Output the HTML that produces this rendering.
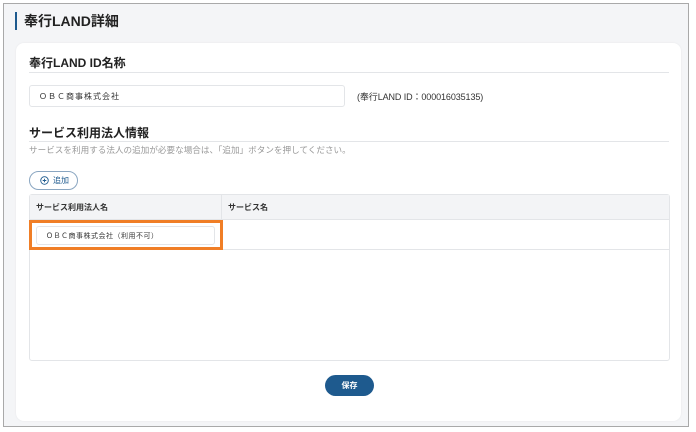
<!DOCTYPE html>
<html><head><meta charset="utf-8"><style>
*{box-sizing:border-box;margin:0;padding:0}
body{width:696px;height:432px;background:#fff;font-family:"Liberation Sans","Noto Sans CJK JP",sans-serif;position:relative;overflow:hidden;color:#222}
.frame{position:absolute;left:3px;top:3px;width:686px;height:424px;border:1px solid #a9a9a9;background:#f4f5f7}
.abs{position:absolute}
.card{left:16px;top:43px;width:665px;height:378px;background:#fff;border-radius:8px;box-shadow:0 0 2px rgba(0,0,0,.06)}
.h{font-weight:bold;font-size:12px;color:#222}
.line{height:1px;background:#e3e5e8}
.inp{border:1px solid #e3e5e8;border-radius:3px;background:#fff;font-size:8px;color:#333;padding-left:9px;display:flex;align-items:center}
</style></head><body>
<div class="frame"></div>
<div class="abs" style="left:15px;top:12px;width:2px;height:18px;background:#1e5a8e"></div>
<div class="abs" style="left:24px;top:12px;font-size:14px;font-weight:bold;line-height:18px">奉行LAND詳細</div>
<div class="abs card"></div>
<div class="abs h" style="left:29px;top:55px;line-height:16px">奉行LAND ID名称</div>
<div class="abs line" style="left:29px;top:72px;width:640px"></div>
<div class="abs inp" style="left:29px;top:85px;width:316px;height:22px;letter-spacing:1px">ＯＢＣ商事株式会社</div>
<div class="abs" style="left:357px;top:90px;font-size:9px;color:#333;letter-spacing:-0.1px">(奉行LAND ID：000016035135)</div>
<div class="abs h" style="left:29px;top:125px;line-height:16px">サービス利用法人情報</div>
<div class="abs line" style="left:29px;top:141px;width:640px"></div>
<div class="abs" style="left:29px;top:144px;font-size:8.6px;color:#999">サービスを利用する法人の追加が必要な場合は、「追加」ボタンを押してください。</div>
<div class="abs" style="left:29px;top:171px;width:49px;height:19px;border:1px solid #8aa6c1;border-radius:10px;font-size:8px;color:#1e5a8e;display:flex;align-items:center;padding-left:10px">
<svg width="9" height="9" viewBox="0 0 10 10" style="margin-right:4px"><circle cx="5" cy="5" r="4.2" fill="none" stroke="#1e5a8e" stroke-width="1"/><path d="M5 3v4M3 5h4" stroke="#1e5a8e" stroke-width="1"/></svg>追加</div>
<div class="abs" style="left:29px;top:194px;width:641px;height:167px;border:1px solid #e3e5e8;border-radius:3px;background:#fff"></div>
<div class="abs" style="left:30px;top:195px;width:639px;height:25px;background:#f3f4f6;border-bottom:1px solid #e3e5e8"></div>
<div class="abs" style="left:221px;top:195px;width:1px;height:25px;background:#e3e5e8"></div>
<div class="abs" style="left:36px;top:202px;font-size:8px;font-weight:bold;color:#333">サービス利用法人名</div>
<div class="abs" style="left:228px;top:202px;font-size:8px;font-weight:bold;color:#333">サービス名</div>
<div class="abs line" style="left:30px;top:249px;width:639px"></div>
<div class="abs" style="left:29px;top:220px;width:194px;height:30px;border:3px solid #f07e26"></div>
<div class="abs inp" style="left:36px;top:226px;width:179px;height:19px;font-size:7px;letter-spacing:.5px">ＯＢＣ商事株式会社（利用不可）</div>
<div class="abs" style="left:325px;top:375px;width:49px;height:21px;background:#1e5a8e;border-radius:11px;color:#fff;font-size:8px;font-weight:bold;display:flex;align-items:center;justify-content:center">保存</div>
</body></html>
